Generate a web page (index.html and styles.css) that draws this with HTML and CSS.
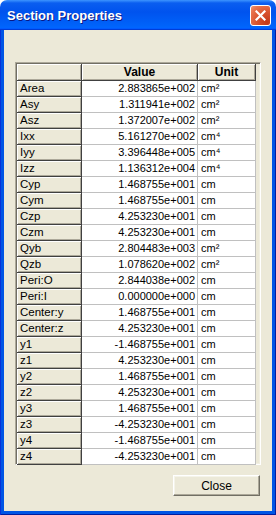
FILE: index.html
```html
<!DOCTYPE html>
<html>
<head>
<meta charset="utf-8">
<link rel="stylesheet" href="styles.css">
</head>
<body>
<div class="window">
  <div class="titlebar">
    <span class="title">Section Properties</span>
    <button class="close" aria-label="Close">
      <svg width="11" height="11" viewBox="0 0 11 11"><path d="M1.5 1.5 L9.5 9.5 M9.5 1.5 L1.5 9.5" stroke="#fff" stroke-width="2.2" stroke-linecap="square"/></svg>
    </button>
  </div>
  <div class="frame">
    <div class="client">
      <div class="grid">
        <table>
          <colgroup><col class="c1"><col class="c2"><col class="c3"></colgroup>
          <thead>
            <tr><th class="corner"></th><th>Value</th><th>Unit</th></tr>
          </thead>
          <tbody>
            <tr><th>Area</th><td class="val">2.883865e+002</td><td class="unit">cm²</td></tr>
            <tr><th>Asy</th><td class="val">1.311941e+002</td><td class="unit">cm²</td></tr>
            <tr><th>Asz</th><td class="val">1.372007e+002</td><td class="unit">cm²</td></tr>
            <tr><th>Ixx</th><td class="val">5.161270e+002</td><td class="unit">cm⁴</td></tr>
            <tr><th>Iyy</th><td class="val">3.396448e+005</td><td class="unit">cm⁴</td></tr>
            <tr><th>Izz</th><td class="val">1.136312e+004</td><td class="unit">cm⁴</td></tr>
            <tr><th>Cyp</th><td class="val">1.468755e+001</td><td class="unit">cm</td></tr>
            <tr><th>Cym</th><td class="val">1.468755e+001</td><td class="unit">cm</td></tr>
            <tr><th>Czp</th><td class="val">4.253230e+001</td><td class="unit">cm</td></tr>
            <tr><th>Czm</th><td class="val">4.253230e+001</td><td class="unit">cm</td></tr>
            <tr><th>Qyb</th><td class="val">2.804483e+003</td><td class="unit">cm²</td></tr>
            <tr><th>Qzb</th><td class="val">1.078620e+002</td><td class="unit">cm²</td></tr>
            <tr><th>Peri:O</th><td class="val">2.844038e+002</td><td class="unit">cm</td></tr>
            <tr><th>Peri:I</th><td class="val">0.000000e+000</td><td class="unit">cm</td></tr>
            <tr><th>Center:y</th><td class="val">1.468755e+001</td><td class="unit">cm</td></tr>
            <tr><th>Center:z</th><td class="val">4.253230e+001</td><td class="unit">cm</td></tr>
            <tr><th>y1</th><td class="val">-1.468755e+001</td><td class="unit">cm</td></tr>
            <tr><th>z1</th><td class="val">4.253230e+001</td><td class="unit">cm</td></tr>
            <tr><th>y2</th><td class="val">1.468755e+001</td><td class="unit">cm</td></tr>
            <tr><th>z2</th><td class="val">4.253230e+001</td><td class="unit">cm</td></tr>
            <tr><th>y3</th><td class="val">1.468755e+001</td><td class="unit">cm</td></tr>
            <tr><th>z3</th><td class="val">-4.253230e+001</td><td class="unit">cm</td></tr>
            <tr><th>y4</th><td class="val">-1.468755e+001</td><td class="unit">cm</td></tr>
            <tr><th>z4</th><td class="val">-4.253230e+001</td><td class="unit">cm</td></tr>
          </tbody>
        </table>
      </div>
      <div class="actions">
        <button class="btn">Close</button>
      </div>
    </div>
  </div>
</div>
</body>
</html>
```
FILE: styles.css
```css
html, body {
  margin: 0;
  padding: 0;
  background: #ffffff;
}
.window {
  width: 276px;
  height: 515px;
  display: flex;
  flex-direction: column;
  border-radius: 7px 7px 0 0;
  overflow: hidden;
  font-family: "Liberation Sans", Arial, sans-serif;
  font-size: 11px;
  color: #000;
}
.titlebar {
  height: 30px;
  flex: none;
  box-sizing: border-box;
  display: flex;
  align-items: center;
  justify-content: space-between;
  padding: 0 4px 0 7px;
  background: linear-gradient(180deg, #3d95ff, #0a5ef0 10%, #0053ee 40%, #0063fa 85%, #0066ff 93%, #005bff 95%, #003dd7 96%, #003dd7);
}
.title {
  color: #fff;
  font-weight: bold;
  font-size: 13px;
  text-shadow: 1px 1px 0 #0a1883;
  padding-top: 1px;
}
.close {
  width: 21px;
  height: 21px;
  box-sizing: border-box;
  margin: 0 1px 0 0;
  padding: 0;
  border: 1px solid #ffffff;
  border-radius: 3px;
  background: radial-gradient(circle at 85% 85%, #c4391a 0, #d9532e 45%, #e8744e 80%, #f09a78 100%);
  display: flex;
  align-items: center;
  justify-content: center;
}
.frame {
  flex: 1;
  display: flex;
  flex-direction: column;
  padding: 0 4px 4px;
  background: #0055e5;
  box-shadow: inset 1px 0 0 #0831d9, inset -1px 0 0 #001ea0, inset 0 -1px 0 #001ea0;
}
.client {
  flex: 1;
  background: #ece9d8;
  padding: 32px 11px 13px 11px;
  display: flex;
  flex-direction: column;
}
.grid {
  width: 246px;
  height: 403px;
  box-sizing: border-box;
  border-style: solid;
  border-width: 1px;
  border-color: #aca899 #ffffff #ffffff #aca899;
  box-shadow: inset 1px 1px 0 #716f64, inset -1px -1px 0 #f1efe2;
  padding: 1px;
  background: #ece9d8;
}
table {
  border-collapse: separate;
  border-spacing: 0;
  table-layout: fixed;
  width: 239px;
}
col.c1 { width: 65px; }
col.c2 { width: 116px; }
col.c3 { width: 58px; }
th {
  background: #ece9d8;
  box-sizing: border-box;
  border-right: 1px solid #404040;
  border-bottom: 1px solid #404040;
  box-shadow: inset 1px 1px 0 #ffffff, inset -1px -1px 0 #aca899;
  padding: 0 0 0 3px;
  text-align: left;
  font-weight: normal;
  font-size: 11.5px;
  white-space: nowrap;
  overflow: hidden;
  height: 16px;
  line-height: 15px;
}
thead th {
  height: 17px;
  line-height: 16px;
  text-align: center;
  font-weight: bold;
  font-size: 12px;
  padding: 0;
}
td {
  background: #ffffff;
  box-sizing: border-box;
  border-right: 1px solid #c0c0c0;
  border-bottom: 1px solid #c0c0c0;
  height: 16px;
  line-height: 15px;
  padding: 0 2px;
  white-space: nowrap;
  overflow: hidden;
}
td.val {
  text-align: right;
}
td.unit {
  text-align: left;
  padding-left: 3px;
}
.actions {
  display: flex;
  justify-content: flex-end;
  margin-top: 10px;
  padding-right: 1px;
}
.btn {
  width: 87px;
  height: 21px;
  box-sizing: border-box;
  margin: 0;
  padding: 0;
  font-family: "Liberation Sans", Arial, sans-serif;
  font-size: 12px;
  color: #000;
  background: #ece9d8;
  border-style: solid;
  border-width: 1px;
  border-color: #ffffff #716f64 #716f64 #ffffff;
  box-shadow: inset -1px -1px 0 #aca899, inset 1px 1px 0 #f5f4ea;
}
```
